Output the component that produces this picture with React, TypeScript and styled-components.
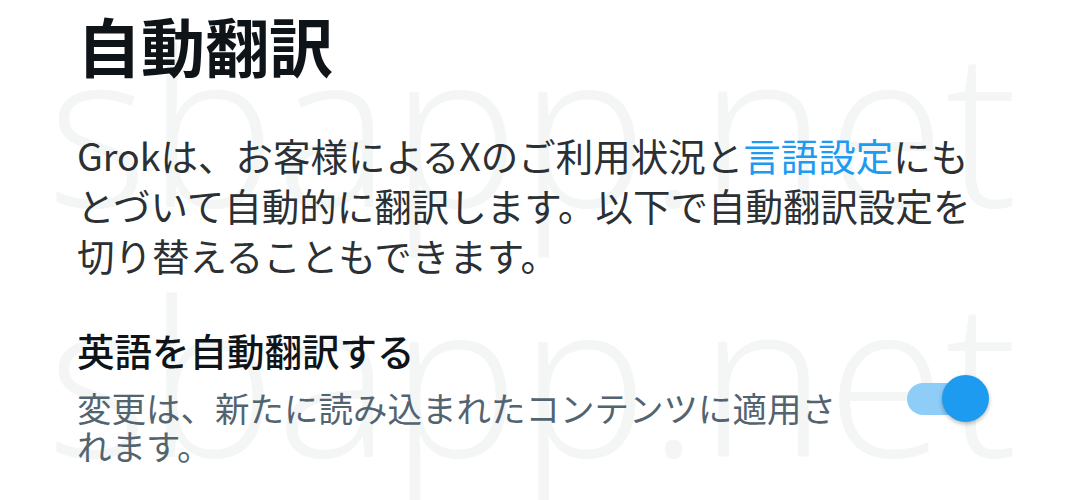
import React, { useState } from 'react';
import styled, { createGlobalStyle } from 'styled-components';

const GlobalStyle = createGlobalStyle`
  html, body {
    margin: 0;
    padding: 0;
    background: #ffffff;
  }
  body {
    font-family: 'Noto Sans CJK JP', 'Noto Sans', sans-serif;
    -webkit-font-smoothing: antialiased;
  }
`;

const Page = styled.div`
  position: relative;
  width: 1071px;
  height: 500px;
  overflow: hidden;
  background: #ffffff;
`;

// faint site watermark layer that sits behind the content
const WatermarkLayer = styled.div`
  position: absolute;
  inset: 0;
  display: flex;
  flex-direction: column;
  gap: 34px;
  padding: 15px 0 0 47px;
  pointer-events: none;
  user-select: none;
`;

const WatermarkLine = styled.div`
  font-family: 'Open Sans', sans-serif;
  font-weight: 300;
  font-size: 216px;
  line-height: 216px;
  color: #f4f5f5;
  white-space: nowrap;
`;

const Content = styled.div`
  position: relative;
  z-index: 1;
  padding: 6px 81px 0 77px;
`;

const Title = styled.h1`
  margin: 0;
  font-size: 64px;
  line-height: 76px;
  font-weight: 700;
  color: #0f1419;
`;

const Description = styled.p`
  margin: 48px 0 0;
  font-size: 37.5px;
  line-height: 50px;
  font-weight: 400;
  color: #2b3034;
`;

const Link = styled.a`
  color: #1d9bf0;
  text-decoration: none;
`;

const SettingRow = styled.div`
  display: flex;
  align-items: center;
  gap: 50px;
  margin-top: 45px;
`;

const SettingText = styled.div`
  width: 780px;
`;

const SettingTitle = styled.div`
  font-size: 37.5px;
  line-height: 50px;
  font-weight: 500;
  color: #0f1419;
`;

const SettingHint = styled.div`
  margin-top: 13px;
  font-size: 34.5px;
  line-height: 38px;
  color: #536471;
`;

const Switch = styled.button<{ $on: boolean }>`
  flex: none;
  display: flex;
  align-items: center;
  justify-content: ${(p) => (p.$on ? 'flex-end' : 'flex-start')};
  width: 75px;
  height: 32px;
  margin-top: 8px;
  padding: 0;
  border: none;
  border-radius: 16px;
  background: ${(p) => (p.$on ? '#8ecdf8' : '#b9cad3')};
  cursor: pointer;
`;

const Thumb = styled.span<{ $on: boolean }>`
  flex: none;
  width: 47px;
  height: 47px;
  margin: 0 -7px;
  border-radius: 50%;
  background: ${(p) => (p.$on ? '#1d9bf0' : '#ffffff')};
  box-shadow: 0 2px 4px rgba(0, 0, 0, 0.28);
`;

export default function App() {
  const [on, setOn] = useState(true);

  return (
    <>
      <GlobalStyle />
      <Page>
        <WatermarkLayer aria-hidden="true">
          <WatermarkLine>sbapp.net</WatermarkLine>
          <WatermarkLine>sbapp.net</WatermarkLine>
        </WatermarkLayer>
        <Content>
          <Title>自動翻訳</Title>
          <Description>
            Grokは、お客様によるXのご利用状況と<Link href="#">言語設定</Link>にもとづいて自動的に翻訳します。以下で自動翻訳設定を切り替えることもできます。
          </Description>
          <SettingRow>
            <SettingText>
              <SettingTitle>英語を自動翻訳する</SettingTitle>
              <SettingHint>変更は、新たに読み込まれたコンテンツに適用されます。</SettingHint>
            </SettingText>
            <Switch role="switch" aria-checked={on} $on={on} onClick={() => setOn(!on)}>
              <Thumb $on={on} />
            </Switch>
          </SettingRow>
        </Content>
      </Page>
    </>
  );
}
